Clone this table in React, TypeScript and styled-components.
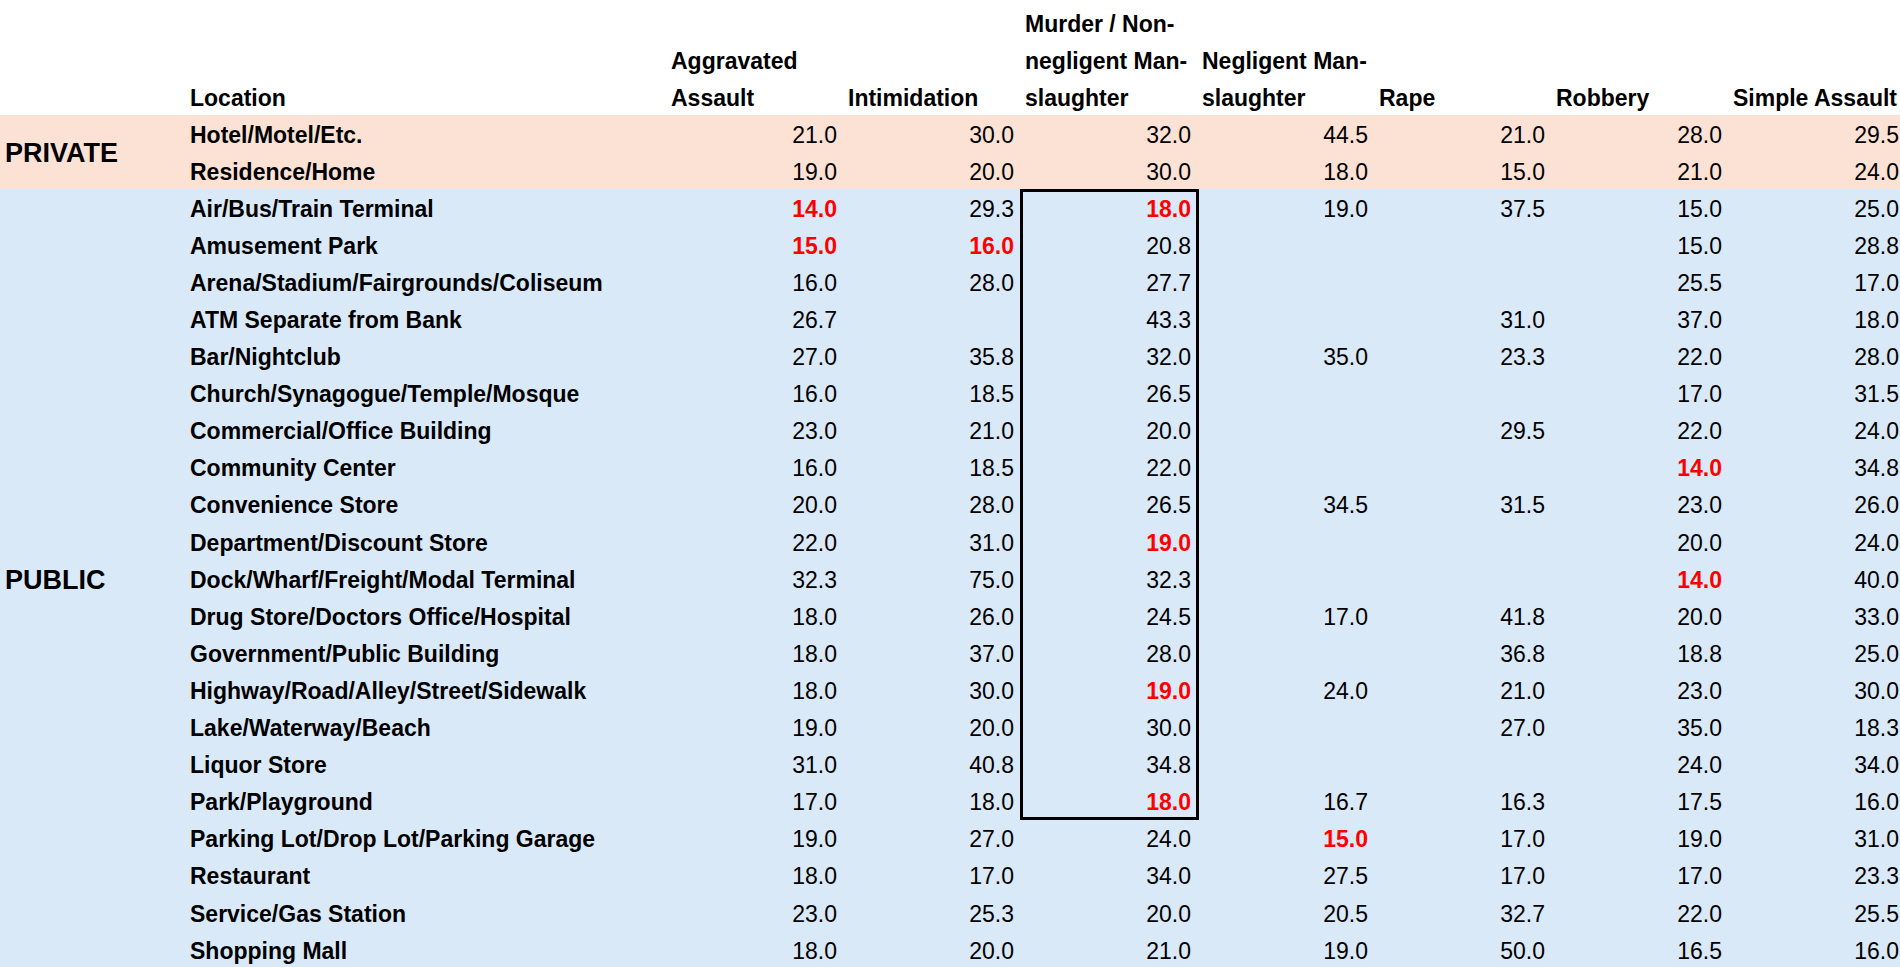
import React from "react"
import styled, { createGlobalStyle } from "styled-components"

const GlobalStyle = createGlobalStyle`
  html, body {
    margin: 0;
    padding: 0;
    background: #ffffff;
    overflow: hidden;
  }
`

const ROW_H = 37.1
const PINK = "#FBE2D5"
const BLUE = "#DAE9F8"

const Sheet = styled.div`
  display: grid;
  grid-template-columns: 184px 481px repeat(7, 177px);
  grid-template-rows: 115px repeat(23, ${ROW_H}px);
  width: 1904px;
  height: 967px;
  overflow: hidden;
  font-family: "Liberation Sans", Arial, sans-serif;
  color: #000;
`

const HeadCell = styled.div`
  grid-row: 1;
  display: flex;
  flex-direction: column;
  justify-content: flex-end;
  padding-left: 6px;
  margin-bottom: -2px;
  font-size: 23px;
  font-weight: 700;
  line-height: ${ROW_H}px;
  white-space: nowrap;
`

const GroupLabel = styled.div<{ $bg: string; $start: number; $span: number }>`
  grid-column: 1;
  grid-row: ${({ $start, $span }) => `${$start} / span ${$span}`};
  display: flex;
  align-items: center;
  padding: 3px 0 0 5px;
  background: ${({ $bg }) => $bg};
  font-size: 27px;
  font-weight: 700;
`

const NameCell = styled.div<{ $bg: string; $row: number }>`
  grid-column: 2;
  grid-row: ${({ $row }) => $row};
  display: flex;
  align-items: center;
  padding: 3px 0 0 6px;
  background: ${({ $bg }) => $bg};
  font-size: 23px;
  font-weight: 700;
  white-space: nowrap;
`

const NumCell = styled.div<{ $bg: string; $row: number; $col: number; $red?: boolean }>`
  grid-column: ${({ $col }) => $col};
  grid-row: ${({ $row }) => $row};
  display: flex;
  align-items: center;
  justify-content: flex-end;
  padding: 3px 5px 0 0;
  background: ${({ $bg }) => $bg};
  font-size: 23px;
  font-weight: ${({ $red }) => ($red ? 700 : 400)};
  color: ${({ $red }) => ($red ? "#FF0000" : "#000")};
`

// outline around the murder column, Air/Bus/Train Terminal to Park/Playground
const Highlight = styled.div`
  grid-column: 5;
  grid-row: 4 / 21;
  margin-left: 1px;
  margin-right: -3px;
  border: 3px solid #000;
  pointer-events: none;
  z-index: 1;
`

const headers: string[][] = [
  ["Location"],
  ["Aggravated", "Assault"],
  ["Intimidation"],
  ["Murder / Non-", "negligent Man-", "slaughter"],
  ["Negligent Man-", "slaughter"],
  ["Rape"],
  ["Robbery"],
  ["Simple Assault"],
]

// "*" marks a value shown in bold red
type Row = [string, string[]]

const privateRows: Row[] = [
  ["Hotel/Motel/Etc.", ["21.0", "30.0", "32.0", "44.5", "21.0", "28.0", "29.5"]],
  ["Residence/Home", ["19.0", "20.0", "30.0", "18.0", "15.0", "21.0", "24.0"]],
]

const publicRows: Row[] = [
  ["Air/Bus/Train Terminal", ["14.0*", "29.3", "18.0*", "19.0", "37.5", "15.0", "25.0"]],
  ["Amusement Park", ["15.0*", "16.0*", "20.8", "", "", "15.0", "28.8"]],
  ["Arena/Stadium/Fairgrounds/Coliseum", ["16.0", "28.0", "27.7", "", "", "25.5", "17.0"]],
  ["ATM Separate from Bank", ["26.7", "", "43.3", "", "31.0", "37.0", "18.0"]],
  ["Bar/Nightclub", ["27.0", "35.8", "32.0", "35.0", "23.3", "22.0", "28.0"]],
  ["Church/Synagogue/Temple/Mosque", ["16.0", "18.5", "26.5", "", "", "17.0", "31.5"]],
  ["Commercial/Office Building", ["23.0", "21.0", "20.0", "", "29.5", "22.0", "24.0"]],
  ["Community Center", ["16.0", "18.5", "22.0", "", "", "14.0*", "34.8"]],
  ["Convenience Store", ["20.0", "28.0", "26.5", "34.5", "31.5", "23.0", "26.0"]],
  ["Department/Discount Store", ["22.0", "31.0", "19.0*", "", "", "20.0", "24.0"]],
  ["Dock/Wharf/Freight/Modal Terminal", ["32.3", "75.0", "32.3", "", "", "14.0*", "40.0"]],
  ["Drug Store/Doctors Office/Hospital", ["18.0", "26.0", "24.5", "17.0", "41.8", "20.0", "33.0"]],
  ["Government/Public Building", ["18.0", "37.0", "28.0", "", "36.8", "18.8", "25.0"]],
  ["Highway/Road/Alley/Street/Sidewalk", ["18.0", "30.0", "19.0*", "24.0", "21.0", "23.0", "30.0"]],
  ["Lake/Waterway/Beach", ["19.0", "20.0", "30.0", "", "27.0", "35.0", "18.3"]],
  ["Liquor Store", ["31.0", "40.8", "34.8", "", "", "24.0", "34.0"]],
  ["Park/Playground", ["17.0", "18.0", "18.0*", "16.7", "16.3", "17.5", "16.0"]],
  ["Parking Lot/Drop Lot/Parking Garage", ["19.0", "27.0", "24.0", "15.0*", "17.0", "19.0", "31.0"]],
  ["Restaurant", ["18.0", "17.0", "34.0", "27.5", "17.0", "17.0", "23.3"]],
  ["Service/Gas Station", ["23.0", "25.3", "20.0", "20.5", "32.7", "22.0", "25.5"]],
  ["Shopping Mall", ["18.0", "20.0", "21.0", "19.0", "50.0", "16.5", "16.0"]],
]

function Group({ label, rows, bg, start }: { label: string; rows: Row[]; bg: string; start: number }) {
  return (
    <>
      <GroupLabel $bg={bg} $start={start} $span={rows.length}>
        {label}
      </GroupLabel>
      {rows.map(([name, values], r) => (
        <React.Fragment key={name}>
          <NameCell $bg={bg} $row={start + r}>
            {name}
          </NameCell>
          {values.map((v, i) => {
            const red = v.endsWith("*")
            return (
              <NumCell key={i} $bg={bg} $row={start + r} $col={i + 3} $red={red}>
                {red ? v.slice(0, -1) : v}
              </NumCell>
            )
          })}
        </React.Fragment>
      ))}
    </>
  )
}

export default function App() {
  return (
    <>
      <GlobalStyle />
      <Sheet>
        <HeadCell />
        {headers.map(lines => (
          <HeadCell key={lines.join(" ")}>
            {lines.map(l => (
              <span key={l}>{l}</span>
            ))}
          </HeadCell>
        ))}
        <Group label="PRIVATE" rows={privateRows} bg={PINK} start={2} />
        <Group label="PUBLIC" rows={publicRows} bg={BLUE} start={2 + privateRows.length} />
        <Highlight />
      </Sheet>
    </>
  )
}
